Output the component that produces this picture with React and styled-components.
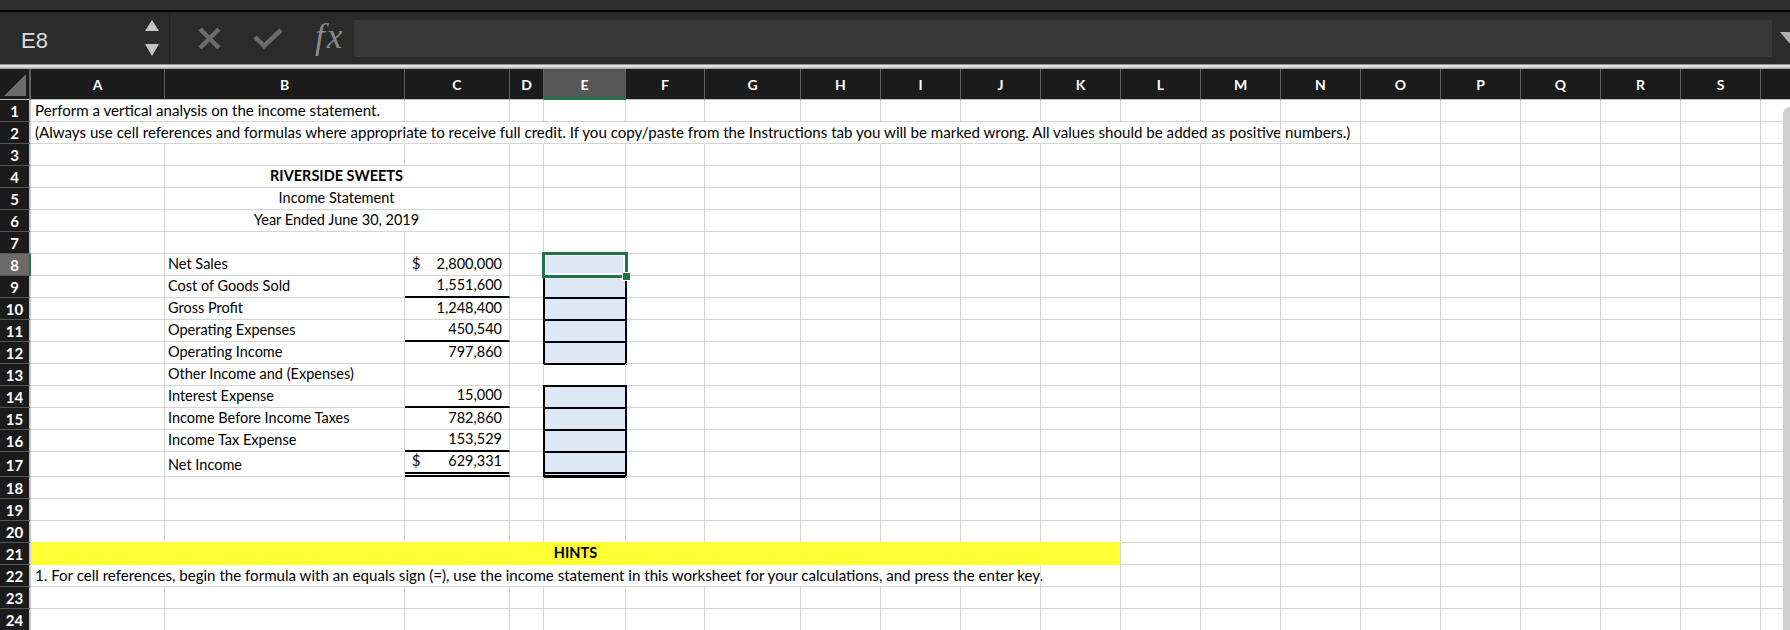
import React from 'react';
import styled, { createGlobalStyle } from 'styled-components';

const GlobalStyle = createGlobalStyle`
  html, body { margin: 0; padding: 0; background: #fff; overflow: hidden; }
  * { box-sizing: border-box; }
`;

const COLUMNS = 'ABCDEFGHIJKLMNOPQRST'.split('');
const TEMPLATE = '31px 134px 240px 105px 34px 82px 79px 96px repeat(12, 80px) 80px';
const GREEN = '#217346';
const GRID = '#d4d4d4';

const Window = styled.div`
  width: 1790px;
  height: 630px;
  overflow: hidden;
  position: relative;
  background: #fff;
  font-family: Lato, "Liberation Sans", sans-serif;
`;

const TopStrip = styled.div`
  height: 12px;
  background: #2e2e2e;
  border-bottom: 2px solid #050505;
`;

const FormulaBar = styled.div`
  height: 52px;
  background: #2b2b2b;
  display: flex;
  align-items: center;
`;

const NameBox = styled.div`
  width: 170px;
  height: 100%;
  display: flex;
  align-items: center;
  justify-content: space-between;
  padding: 0 10px 0 21px;
  border-right: 1px solid #222;
`;

const NameText = styled.span`
  font-family: "Liberation Sans", Arial, sans-serif;
  font-size: 22px;
  color: #dcdcdc;
  padding-top: 5px;
`;

const Actions = styled.div`
  display: flex;
  align-items: center;
  height: 100%;
  padding-left: 28px;
  gap: 32px;
`;

const Fx = styled.span`
  font-family: "Liberation Serif", "Times New Roman", serif;
  font-style: italic;
  font-size: 35px;
  color: #8a8a8a;
  letter-spacing: 2px;
  padding-bottom: 3px;
`;

const FormulaInput = styled.div`
  flex: 1;
  height: 37px;
  margin-left: 10px;
  background: #393939;
  border-radius: 2px;
`;

const DropArrow = styled.div`
  width: 18px;
  display: flex;
  justify-content: flex-end;
`;

const Divider = styled.div`
  height: 5px;
  background: linear-gradient(to bottom, #6a6a6a 0, #e6e6e6 30%, #d6d6d6 60%, #9a9a9a 100%);
`;

const HeaderRow = styled.div`
  display: grid;
  grid-template-columns: ${TEMPLATE};
  height: 31px;
  background: #1b1b1b;
`;

const Corner = styled.div`
  border-right: 2px solid #5e5e5e;
  border-bottom: 1px solid #bdbdbd;
  display: flex;
  align-items: flex-end;
  justify-content: flex-end;
  padding: 0 3px 3px 0;
`;

const ColHead = styled.div`
  display: flex;
  align-items: center;
  justify-content: center;
  color: #fff;
  font-weight: 700;
  font-size: 14px;
  border-right: 1px solid #5e5e5e;
  border-bottom: ${p => (p.$active ? `3px solid ${GREEN}` : '1px solid #bdbdbd')};
  background: ${p => (p.$active ? '#575757' : 'transparent')};
  padding-top: ${p => (p.$active ? '2px' : '0')};
`;

const Row = styled.div`
  display: grid;
  grid-template-columns: ${TEMPLATE};
  height: ${p => p.$h}px;
`;

const RowHead = styled.div`
  background: ${p => (p.$active ? '#6b6b6b' : '#1b1b1b')};
  border-bottom: 1px solid #555;
  border-right: 2px solid ${p => (p.$active ? GREEN : '#c4c4c4')};
  color: #fff;
  font-weight: 700;
  font-size: 15px;
  display: flex;
  align-items: center;
  justify-content: center;
  padding-top: 1px;
`;

const Cell = styled.div`
  grid-column: span ${p => p.$span || 1};
  min-width: 0;
  display: flex;
  align-items: flex-end;
  justify-content: ${p => p.$justify || 'flex-start'};
  padding: 0 ${p => p.$padR || 4}px 2px ${p => p.$padL || 4}px;
  white-space: nowrap;
  font-size: ${p => p.$size || 14.5}px;
  line-height: 18px;
  color: #000;
  font-weight: ${p => (p.$bold ? 700 : 400)};
  background: ${p => p.$fill || 'transparent'};
  border-right: 1px solid ${p => (p.$open ? 'transparent' : GRID)};
  border-bottom: ${p =>
    p.$rule === 'double' ? '5px double #000'
      : p.$rule === 'single' ? '2px solid #000'
        : `1px solid ${p.$fill || GRID}`};
  box-shadow: ${p => (p.$fill ? `0 -1px 0 ${p.$fill}` : 'none')};
`;

const InputCell = styled(Cell)`
  background: #dde8f4;
  outline: ${p => (p.$selected ? `3px solid ${GREEN}` : '2px solid #000')};
  outline-offset: -1px;
  box-shadow: ${p => (p.$selected ? 'inset 0 0 0 2px #fff' : 'none')};
  position: ${p => (p.$selected ? 'relative' : 'static')};
`;

const Handle = styled.span`
  position: absolute;
  right: -6px;
  bottom: -6px;
  width: 9px;
  height: 9px;
  background: ${GREEN};
  border: 1px solid #fff;
`;

const ScrollTrack = styled.div`
  position: absolute;
  right: 0;
  top: 107px;
  width: 7px;
  height: 540px;
  background: #cfcfcf;
  border-radius: 7px 0 0 0;
`;

const rule = r => ({ rule: r });

const ROWS = [
  { A: { text: 'Perform a vertical analysis on the income statement.', cover: 2, size: 15.1 } },
  { A: { text: '(Always use cell references and formulas where appropriate to receive full credit. If you copy/paste from the Instructions tab you will be marked wrong. All values should be added as positive numbers.)', cover: 13, size: 15.1 } },
  {},
  { B: { text: 'RIVERSIDE SWEETS', span: 2, bold: true, center: true } },
  { B: { text: 'Income Statement', span: 2, center: true } },
  { B: { text: 'Year Ended June 30, 2019', span: 2, center: true } },
  {},
  { B: { text: 'Net Sales' }, C: { money: '2,800,000', dollar: true }, E: { input: true, selected: true } },
  { B: { text: 'Cost of Goods Sold' }, C: { money: '1,551,600', ...rule('single') }, E: { input: true } },
  { B: { text: 'Gross Profit' }, C: { money: '1,248,400' }, E: { input: true } },
  { B: { text: 'Operating Expenses' }, C: { money: '450,540', ...rule('single') }, E: { input: true } },
  { B: { text: 'Operating Income' }, C: { money: '797,860' }, E: { input: true } },
  { B: { text: 'Other Income and (Expenses)' } },
  { B: { text: 'Interest Expense' }, C: { money: '15,000', ...rule('single') }, E: { input: true } },
  { B: { text: 'Income Before Income Taxes' }, C: { money: '782,860' }, E: { input: true } },
  { B: { text: 'Income Tax Expense' }, C: { money: '153,529', ...rule('single') }, E: { input: true } },
  { B: { text: 'Net Income' }, C: { money: '629,331', dollar: true, ...rule('double') }, E: { input: true, ...rule('double') } },
  {},
  {},
  {},
  { A: { text: 'HINTS', span: 11, bold: true, center: true, fill: '#ffff33' } },
  { A: { text: '1. For cell references, begin the formula with an equals sign (=), use the income statement in this worksheet for your calculations, and press the enter key.', cover: 10, size: 15.1 } },
  {},
  {},
];

function SheetRow({ n, spec }) {
  const cells = [];
  let open = 0;
  for (let i = 0; i < COLUMNS.length; i++) {
    const key = COLUMNS[i];
    const c = spec[key] || {};
    if (c.cover) open = c.cover;
    const span = c.span || 1;
    const common = {
      key,
      $span: span,
      $open: open > 1,
      $rule: c.rule,
      $bold: c.bold,
      $fill: c.fill,
      $size: c.size,
    };
    if (c.input) {
      cells.push(
        <InputCell {...common} $selected={c.selected}>
          {c.selected && <Handle />}
        </InputCell>
      );
    } else if (c.money) {
      cells.push(
        <Cell {...common} $justify={c.dollar ? 'space-between' : 'flex-end'} $padL={7} $padR={7}>
          {c.dollar && <span>$</span>}
          <span>{c.money}</span>
        </Cell>
      );
    } else {
      cells.push(
        <Cell {...common} $justify={c.center ? 'center' : 'flex-start'} $padL={key === 'B' ? 3 : 4}>
          {c.text}
        </Cell>
      );
    }
    if (open > 0) open -= span;
    i += span - 1;
  }
  return (
    <Row $h={n === 17 ? 25 : 22}>
      <RowHead $active={n === 8}>{n}</RowHead>
      {cells}
    </Row>
  );
}

export default function App() {
  return (
    <Window>
      <GlobalStyle />
      <TopStrip />
      <FormulaBar>
        <NameBox>
          <NameText>E8</NameText>
          <svg width="14" height="36" viewBox="0 0 14 36">
            <polygon points="7,0 14,11 0,11" fill="#c4c4c4" />
            <polygon points="0,24 14,24 7,36" fill="#c4c4c4" />
          </svg>
        </NameBox>
        <Actions>
          <svg width="23" height="23" viewBox="0 0 23 23">
            <path d="M2 2 L21 21 M21 2 L2 21" stroke="#6b6b6b" strokeWidth="4.5" />
          </svg>
          <svg width="30" height="22" viewBox="0 0 30 22">
            <path d="M2 10 L11 19 L28 3" stroke="#6b6b6b" strokeWidth="4.5" fill="none" />
          </svg>
          <Fx>fx</Fx>
        </Actions>
        <FormulaInput />
        <DropArrow>
          <svg width="10" height="12" viewBox="0 0 10 12">
            <polygon points="0,0 10,0 10,12" fill="#b0b0b0" />
          </svg>
        </DropArrow>
      </FormulaBar>
      <Divider />
      <HeaderRow>
        <Corner>
          <svg width="22" height="22" viewBox="0 0 22 22">
            <polygon points="22,0 22,22 0,22" fill="#6b6b6b" />
          </svg>
        </Corner>
        {COLUMNS.map(c => (
          <ColHead key={c} $active={c === 'E'}>{c === 'T' ? '' : c}</ColHead>
        ))}
      </HeaderRow>
      {ROWS.map((spec, i) => (
        <SheetRow key={i} n={i + 1} spec={spec} />
      ))}
      <ScrollTrack />
    </Window>
  );
}
